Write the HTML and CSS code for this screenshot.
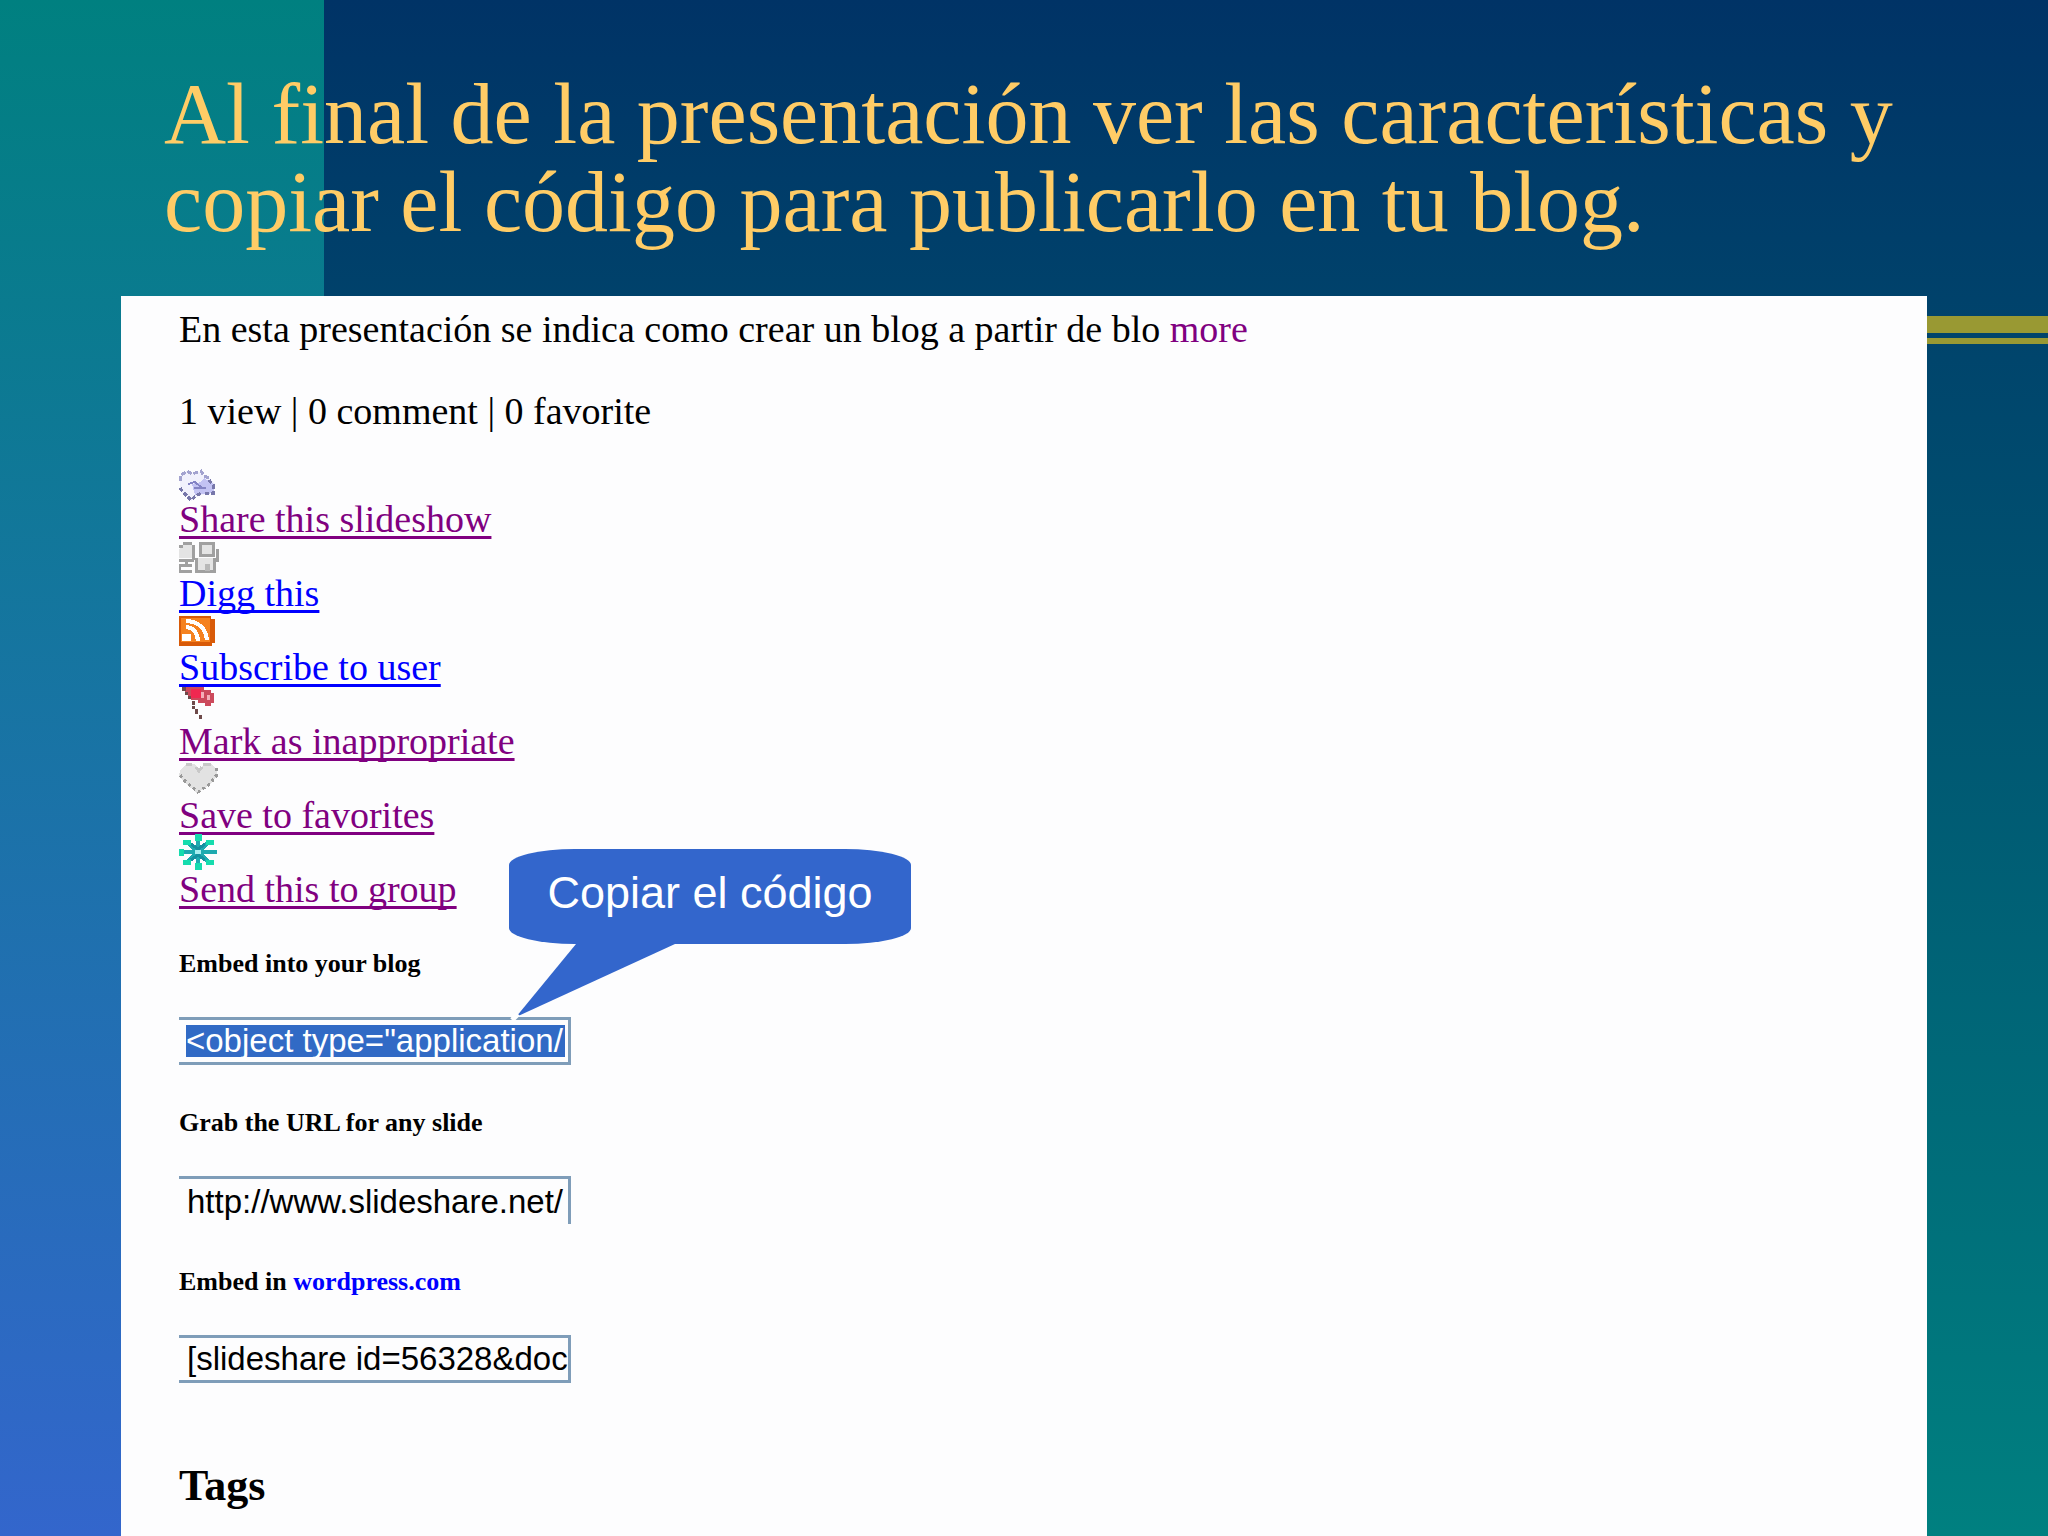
FILE: index.html
```html
<!DOCTYPE html>
<html lang="es">
<head>
    <meta charset="UTF-8">
    <meta name="viewport" content="width=device-width, initial-scale=1.0">
    <title>Publicar la presentación en tu blog</title>
    <link rel="stylesheet" href="styles.css">
</head>
<body>
    <div class="slide">
        <h1 class="title">Al final de la presentación ver las características y copiar el código para publicarlo en tu blog.</h1>

        <main class="panel">
            <p class="description">En esta presentación se indica como crear un blog a partir de blo <a href="#" class="more">more</a></p>
            <p class="stats">1 view | 0 comment | 0 favorite</p>

            <ul class="actions">
                <li>
                    <svg class="icon" viewBox="0 0 40 40">
                        <path d="M1 14l7-5 5 3 9-3 3 5 5 2 6 6-1 9-9 1-8 3-6 4-5-5-6-5z" fill="#f1f1fc"/>
                        <path d="M1 19v-5l7-5 5 3 9-3 3 5 5 2" fill="none" stroke="#a3a3cf" stroke-width="3" stroke-dasharray="5 2"/>
                        <path d="M13 22l9-2 3-4 10 6v9l-9 1-10 1z" fill="#c3c3f3"/>
                        <path d="M9 22l7-2 7 6M15 26h12" fill="none" stroke="#8484c4" stroke-width="2"/>
                        <path d="M1 26l5 6 6 6 6-5 5-2M30 18l4 5v8h-8" fill="none" stroke="#7777aa" stroke-width="3" stroke-dasharray="4 2"/>
                    </svg>
                    <a href="#" class="visited">Share this slideshow</a>
                </li>
                <li>
                    <svg class="icon" viewBox="0 0 40 40">
                        <path d="M4 9h10v13H0v-9zM20 6h14v12H20zM17 22h19v13H17z" fill="#e4e4e4"/>
                        <path d="M0 10h4M4 7h9M14 9v15M0 24h15M7 24v6M0 34v-5h13M0 35h13" fill="none" stroke="#a0a0a0" stroke-width="3"/>
                        <path d="M21 7h13v12H21zM38 13v11h-4M17 22v13h18V22" fill="none" stroke="#a0a0a0" stroke-width="3"/>
                        <path d="M26 28h5v7h-5z" fill="#b8b8b8"/>
                    </svg>
                    <a href="#" class="link">Digg this</a>
                </li>
                <li>
                    <svg class="icon" viewBox="0 0 40 40">
                        <path d="M0 6h32v3h4v24h-3v3H0z" fill="#d85a08"/>
                        <path d="M2 8h29v24H2z" fill="#f58220"/>
                        <path d="M3 24h9v7H3z" fill="#fff"/>
                        <path d="M7 17q11 1 12 14M7 11q19 1 21 19" fill="none" stroke="#fff" stroke-width="4"/>
                    </svg>
                    <a href="#" class="link">Subscribe to user</a>
                </li>
                <li>
                    <svg class="icon" viewBox="0 0 40 40">
                        <path d="M3 3h22v3h7v3h3v10h-3v3h-6v-3h-7v-3h-7v-3H9v-3H6V7H3z" fill="#cc4a5c"/>
                        <path d="M12 5h10v9H12z" fill="#f02850"/>
                        <path d="M22 8h3v6h-3zM28 11h3v5h-3z" fill="#f4b0b8"/>
                        <path d="M3 3h4v4H3zM6 8h3v3H6zM9 12h3v3H9zM13 17h3v4h-3zM13 22h3v3h-3zM16 25h3v5h-3zM20 31h3v4h-3z" fill="#6e4a4a"/>
                    </svg>
                    <a href="#" class="visited">Mark as inappropriate</a>
                </li>
                <li>
                    <svg class="icon" viewBox="0 0 40 40">
                        <path d="M1 12l7-7 7 1 5 5 5-5h7l6 6v6l-6 8-9 6-5 3-6-5-7-6-5-6z" fill="#e2e2e2"/>
                        <path d="M7 6h6M24 6h8M17 9l3 4 3-4" fill="none" stroke="#c8c8c8" stroke-width="3"/>
                        <path d="M37 10v8l-6 8-9 6-3 2-6-5-7-6-5-6" fill="none" stroke="#999" stroke-width="3" stroke-dasharray="3 3"/>
                    </svg>
                    <a href="#" class="visited">Save to favorites</a>
                </li>
                <li>
                    <svg class="icon" viewBox="0 0 40 40">
                        <path d="M19 2v36M1 20h37M7 9l24 22M31 9L7 31" fill="none" stroke="#1eaab0" stroke-width="4"/>
                        <path d="M16 2h7v7h-7zM16 31h7v7h-7zM0 17h5v7H0zM4 8h8v5H4zM27 8h8v5h-8zM4 28h8v5H4zM27 28h8v5h-8z" fill="#16dcae"/>
                        <path d="M12 12l7 5 7-5M12 28l7-5 7 5" fill="none" stroke="#1590a0" stroke-width="3"/>
                        <path d="M16 18h6v4h-6z" fill="#a8eef0"/>
                    </svg>
                    <a href="#" class="visited">Send this to group</a>
                </li>
            </ul>

            <div class="field">
                <label for="embed">Embed into your blog</label>
                <div class="box">
                    <input id="embed" class="selected" type="text" value="&lt;object type=&quot;application/">
                    <div class="callout">
                        <svg class="tail" viewBox="0 0 170 80">
                            <path d="M67 3L7 76L166 3z" fill="#3366cc"/>
                            <path d="M9 73L3 79" stroke="#fff" stroke-width="5"/>
                        </svg>
                        <span>Copiar el código</span>
                    </div>
                </div>
            </div>
            <div class="field">
                <label for="url">Grab the URL for any slide</label>
                <input id="url" class="open" type="text" value="http://www.slideshare.net/">
            </div>
            <div class="field">
                <label for="wordpress">Embed in <a href="#" class="plain">wordpress.com</a></label>
                <input id="wordpress" type="text" value="[slideshare id=56328&amp;doc">
            </div>

            <h2 class="tags">Tags</h2>
        </main>
    </div>
</body>
</html>
```
FILE: styles.css
```css
* {
    box-sizing: border-box;
}

body {
    margin: 0;
    font-family: "Liberation Serif", "Times New Roman", serif;
    font-size: 38px;
    color: #000;
}

/* teal band on the left, two olive stripes on the right, navy behind */
.slide {
    display: flex;
    flex-direction: column;
    min-height: 100vh;
    padding: 70px 121px 0;
    background:
        linear-gradient(#008080, #3366cc) left top / 324px 100% no-repeat,
        linear-gradient(#999933, #999933) right 316px / 200px 17px no-repeat,
        linear-gradient(#999933, #999933) right 338px / 200px 6px no-repeat,
        linear-gradient(#003366, #008080);
}

.title {
    margin: 0 0 50px;
    padding: 0 25px 0 43px;
    font-size: 86px;
    font-weight: normal;
    line-height: 88px;
    color: #ffcc66;
}

.panel {
    flex: 1;
    padding: 11px 58px 0;
    background-color: #fdfdfe;
}

.description,
.stats {
    margin: 0 0 38px;
    line-height: 44px;
}

.stats {
    margin-bottom: 29px;
}

.more {
    color: #800080;
    text-decoration: none;
}

.actions {
    margin: 0;
    padding: 0;
    list-style: none;
    line-height: 34px;
}

.icon {
    display: block;
    width: 40px;
    height: 40px;
    shape-rendering: crispEdges;
}

.link,
.visited {
    color: #0000ff;
    text-decoration-thickness: 3px;
    text-underline-offset: 4px;
    text-decoration-skip-ink: none;
}

.visited {
    color: #800080;
}

.field {
    margin-top: 40px;
}

.field label {
    display: block;
    margin-bottom: 35px;
    font-size: 26px;
    font-weight: bold;
    line-height: 36px;
}

.plain {
    color: #0000ff;
    text-decoration: none;
}

.box {
    position: relative;
}

input {
    display: block;
    width: 392px;
    height: 48px;
    padding: 4px 0 4px 8px;
    border: 3px solid #7f9db9;
    border-left: none;
    background-color: transparent;
    font-family: "Liberation Sans", Arial, sans-serif;
    font-size: 33px;
    color: #000;
}

.open {
    border-bottom: none;
}

.selected {
    padding: 5px 3px 5px 7px;
    background: #316ac5 content-box;
    color: #fff;
}

.callout {
    position: absolute;
    left: 330px;
    bottom: 121px;
    width: 402px;
    height: 95px;
    border-radius: 66px / 16px;
    background-color: #3366cc;
    font-family: "Liberation Sans", Arial, sans-serif;
    font-size: 45px;
    line-height: 88px;
    text-align: center;
    color: #fff;
}

.tail {
    position: absolute;
    left: 0;
    top: 92px;
    width: 170px;
    height: 80px;
}

.tags {
    margin: 75px 0 0;
    font-size: 44px;
    line-height: 56px;
}
```
